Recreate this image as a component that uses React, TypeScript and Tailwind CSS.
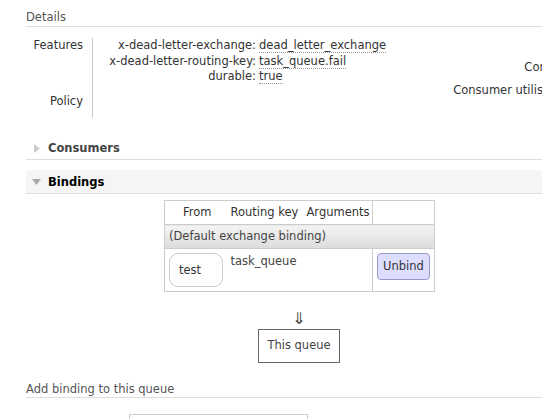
import React from "react";

const font = { fontFamily: '"DejaVu Sans", Verdana, sans-serif' };

function Val({ children }: { children: React.ReactNode }) {
  return (
    <span className="border-b border-dotted border-[#999] leading-[13px] inline-block">{children}</span>
  );
}

export default function App() {
  return (
    <div className="w-[542px] h-[419px] overflow-hidden bg-white text-[11.5px] text-[#333]" style={font}>
      <div className="w-[620px] pl-[26px]">
        {/* Details */}
        <div className="h-[27px] pt-[9px] border-b border-[#ddd] text-[#555] leading-[16px]">Details</div>
        <div className="flex mt-[11px] h-[80px]">
          <div className="w-[67px] border-r border-[#ccc] pr-[9px] text-right flex flex-col">
            <div className="leading-[15.5px]">Features</div>
            <div className="leading-[15.5px] mt-[40px]">Policy</div>
          </div>
          <div className="flex">
            <div className="w-[163px] text-right flex flex-col">
              <div className="leading-[15.5px] whitespace-nowrap">x-dead-letter-exchange:</div>
              <div className="leading-[15.5px] whitespace-nowrap">x-dead-letter-routing-key:</div>
              <div className="leading-[15.5px] whitespace-nowrap">durable:</div>
            </div>
            <div className="pl-[3px] flex flex-col w-[163px]">
              <div className="leading-[15.5px] h-[15.5px] whitespace-nowrap"><Val>dead_letter_exchange</Val></div>
              <div className="leading-[15.5px] h-[15.5px] whitespace-nowrap"><Val>task_queue.fail</Val></div>
              <div className="leading-[15.5px] h-[15.5px] whitespace-nowrap"><Val>true</Val></div>
            </div>
          </div>
          <div className="flex-1 flex flex-col items-end pr-[31px]">
            <div className="leading-[15.5px] whitespace-nowrap">State</div>
            <div className="leading-[15.5px] mt-[6.5px] whitespace-nowrap">Consumers</div>
            <div className="leading-[15.5px] mt-[7.5px] mr-[17px] whitespace-nowrap">Consumer utilisation</div>
          </div>
        </div>

        {/* Consumers */}
        <div className="mt-[19px] h-[23px] border-b border-[#ddd] flex items-center w-[516px]">
          <svg width="6" height="9" viewBox="0 0 6 9" className="ml-[8px]">
            <path d="M0 0 L6 4.5 L0 9 Z" fill="#ccc" />
          </svg>
          <span className="ml-[8px] font-bold text-[#444] leading-[16px]">Consumers</span>
        </div>

        {/* Bindings */}
        <div className="mt-[10px] h-[24px] bg-[#f5f5f5] border-b border-[#ddd] flex items-center w-[516px] pt-[1px]">
          <svg width="9" height="6" viewBox="0 0 9 6" className="ml-[6px]">
            <path d="M0 0 L9 0 L4.5 6 Z" fill="#aaa" />
          </svg>
          <span className="ml-[7px] font-bold text-black leading-[16px]">Bindings</span>
        </div>

        <div className="w-[516px]">
          <table className="mt-[6px] ml-[138px] border-collapse border border-[#ccc] w-[271px]">
            <thead>
              <tr className="h-[24px]">
                <th className="font-normal text-center w-[62px] pl-[3px]">From</th>
                <th className="font-normal text-left w-[78px] pl-[4px] whitespace-nowrap">Routing key</th>
                <th className="font-normal text-left w-[68px] pl-[2px]">Arguments</th>
                <th className="font-normal border-l border-[#ccc]"></th>
              </tr>
            </thead>
            <tbody>
              <tr className="h-[24px] border-t border-[#ccc]">
                <td colSpan={4} className="pl-[4px] text-[#444] bg-gradient-to-b from-[#f4f4f4] to-[#dcdcdc]">
                  (Default exchange binding)
                </td>
              </tr>
              <tr className="h-[43px] border-t border-[#ccc]">
                <td className="align-top pl-[4px] pt-[4px]">
                  <div className="w-[54px] h-[34px] border border-[#ccc] rounded-[9px] flex items-center pl-[9px] pt-[1px]">
                    test
                  </div>
                </td>
                <td className="align-top pl-[4px] pt-[4px] text-[#444]">task_queue</td>
                <td></td>
                <td className="border-l border-[#ccc] align-top pt-[4px] pl-[4px]">
                  <div className="w-[53px] h-[27px] bg-[#ddf] border border-[#99c] rounded-[4px] flex items-center justify-center text-[#333]">
                    Unbind
                  </div>
                </td>
              </tr>
            </tbody>
          </table>
        </div>

        <div className="w-[546px] flex flex-col items-center">
          <div className="mt-[18px] text-[16px] leading-[18px] text-[#444]">⇓</div>
          <div className="mt-[1px] w-[82px] h-[34px] border border-[#666] flex items-center justify-center text-[#444]">
            This queue
          </div>
        </div>

        <div className="mt-[17px] h-[18px] pt-[1px] border-b border-[#ddd] w-[516px] text-[#555] leading-[16px]">
          Add binding to this queue
        </div>
        <div className="mt-[16px] ml-[103px] w-[179px] h-[20px] border border-[#ccc]"></div>
      </div>
    </div>
  );
}
